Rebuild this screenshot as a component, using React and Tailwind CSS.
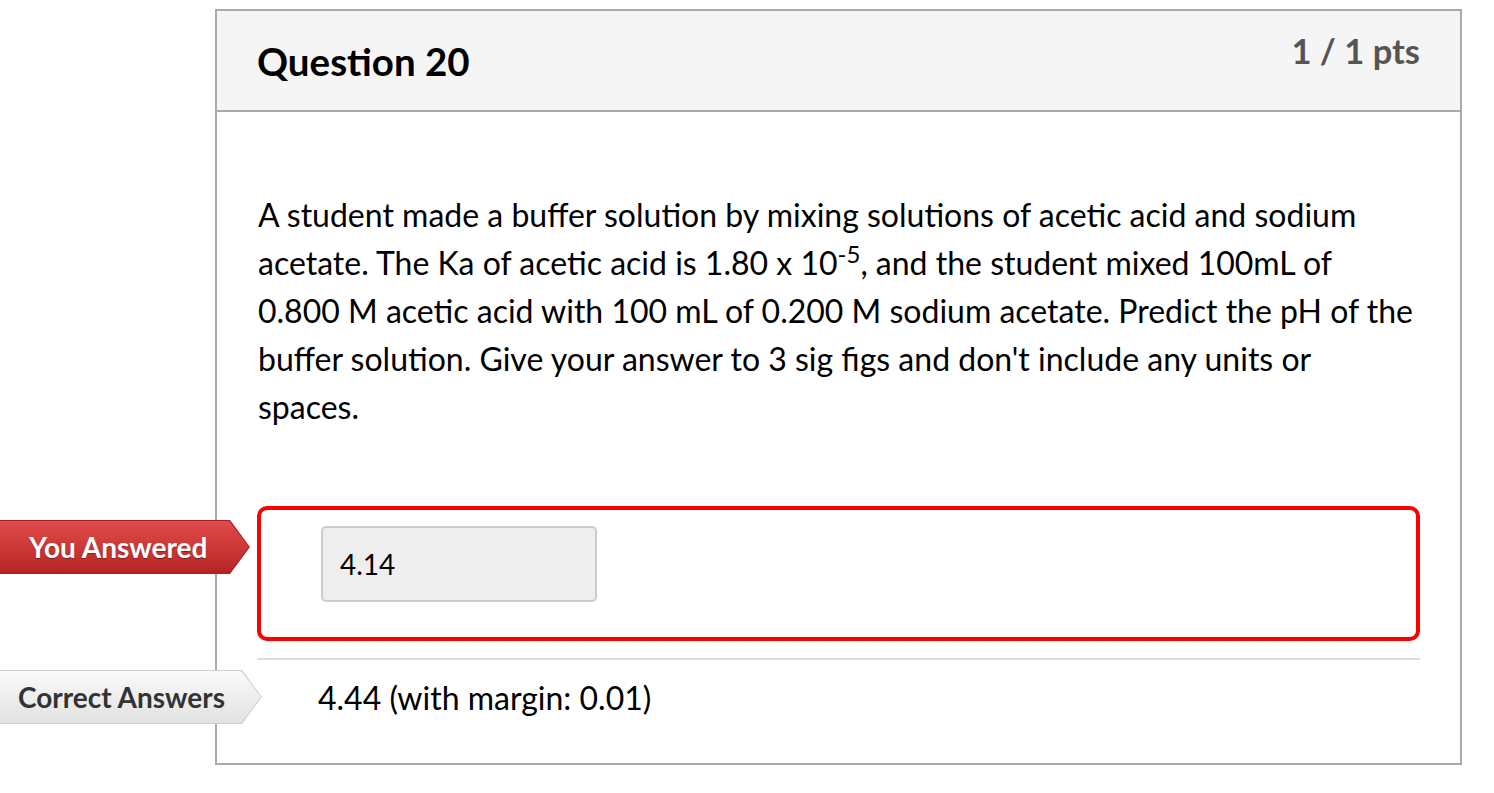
import React from "react";

const font = { fontFamily: "Lato, 'Noto Sans', sans-serif" };

function Tag({ top, width, variant, children }) {
  const isRed = variant === "red";
  return (
    <div
      className="absolute left-0 h-[54px]"
      style={{ top, width }}
    >
      <div
        className={
          "absolute inset-0 [clip-path:polygon(0_0,calc(100%-20px)_0,100%_50%,calc(100%-20px)_100%,0_100%)] " +
          (isRed ? "bg-[#a82020]" : "bg-[#cfcfcf]")
        }
      />
      <div
        className={
          "absolute top-[1px] bottom-[1px] left-0 right-[1px] [clip-path:polygon(0_0,calc(100%-20px)_0,100%_50%,calc(100%-20px)_100%,0_100%)] flex items-center " +
          (isRed
            ? "bg-gradient-to-b from-[#e34b4b] to-[#b52424] text-white [text-shadow:0_1px_1px_rgba(0,0,0,0.35)] pl-[29px]"
            : "bg-gradient-to-b from-[#fafafa] to-[#e2e2e2] text-[#333] pl-[18px]")
        }
      >
        <span className="text-[28px] font-bold leading-none">{children}</span>
      </div>
    </div>
  );
}

export default function App() {
  return (
    <div className="relative min-h-[793px] bg-white pt-[9px] pl-[215px]" style={font}>
      <div className="w-[1247px] border-2 border-[#aaa] bg-white">
        <div className="h-[101px] bg-[#f5f5f5] border-b-2 border-[#aaa] flex justify-between px-[40px]">
          <div className="pt-[27px] text-[38.5px] font-bold leading-[1.2] text-black">Question 20</div>
          <div className="pt-[19px] text-[34.5px] font-bold leading-[1.2] text-[#555]">1 / 1 pts</div>
        </div>
        <div className="px-[40px] pt-[79px] pb-[41px]">
          <p className="w-[1159px] text-[32px] leading-[48px] text-black pl-[1px]">
            A student made a buffer solution by mixing solutions of acetic acid and sodium acetate. The Ka of acetic acid is 1.80 x 10<sup>-5</sup>, and the student mixed 100mL of 0.800 M acetic acid with 100 mL of 0.200 M sodium acetate. Predict the pH of the buffer solution. Give your answer to 3 sig figs and don't include any units or spaces.
          </p>
          <div className="mt-[75px] h-[135px] border-4 border-[#ff0000] rounded-[10px] pt-[16px] pl-[60px]">
            <div className="w-[276px] h-[76px] bg-[#eeeeee] border-2 border-[#cccccc] rounded-[5px] flex items-center pl-[17px] text-[28px] text-black">
              4.14
            </div>
          </div>
          <div className="mt-[17px] h-[2px] bg-[#dddddd]" />
          <div className="mt-[14px] pl-[61px] text-[32px] leading-[48px] text-black">
            4.44 (with margin: 0.01)
          </div>
        </div>
      </div>
      <Tag top={520} width={250} variant="red">You Answered</Tag>
      <Tag top={670} width={262} variant="gray">Correct Answers</Tag>
    </div>
  );
}
